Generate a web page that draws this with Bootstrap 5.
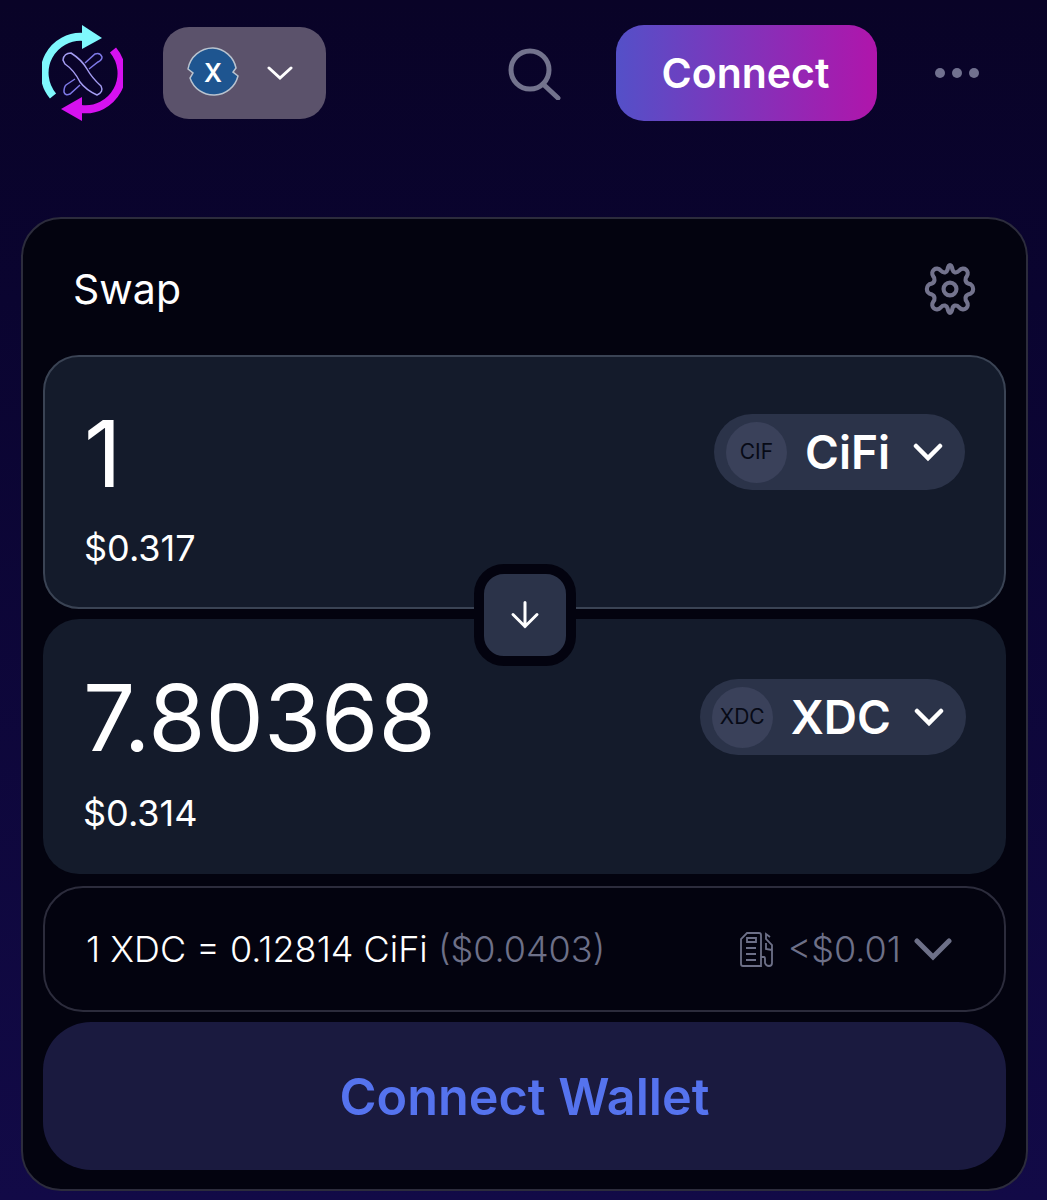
<!DOCTYPE html>
<html lang="en">
<head>
    <meta charset="UTF-8">
    <meta name="viewport" content="width=device-width, initial-scale=1.0">
    <title>Swap</title>
    <link href="https://cdn.jsdelivr.net/npm/bootstrap@5.3.0/dist/css/bootstrap.min.css" rel="stylesheet">
    <style>
        body {
            background: linear-gradient(180deg, #090327 0%, #0a0430 25%, #120a47 100%);
            font-family: Inter, "Liberation Sans", sans-serif;
            color: #fff;
            height: 1200px;
            overflow: hidden;
        }
        .top-bar { height: 146px; padding: 25px 0 25px 42px; }
        .logo-mark { width: 81px; height: 96px; }
        .chain-btn {
            width: 163px; height: 92px; margin-left: 40px; padding-left: 24px;
            background: #5b526b; border-radius: 26px; border: 0;
        }
        .chain-coin { width: 52px; height: 52px; }
        .chain-caret { width: 26px; height: 16px; margin-left: 28px; }
        .search-btn { width: 54px; height: 52px; margin-left: 182px; margin-top: 1px; }
        .connect-btn {
            width: 261px; height: 96px; margin-left: 54px;
            background: linear-gradient(90deg, #5450c8 0%, #b015ab 100%);
            border: 0; border-radius: 28px; color: #fff;
            font-size: 41px; font-weight: 600; padding: 2px 8px 0 6px;
        }
        .more-dots { margin-left: 58px; gap: 7px; }
        .more-dots span { width: 10px; height: 10px; border-radius: 50%; background: #71718f; }
        .swap-box {
            width: 1007px; height: 974px; margin: 71px 0 0 21px;
            background: #03030f; border: 2px solid #2c2c3c; border-radius: 40px;
            padding: 0 20px;
        }
        .swap-head { height: 136px; padding: 0 30px 0 30px; }
        .swap-title { font-size: 41px; font-weight: 400; line-height: 1; padding-top: 5px; }
        .gear-icon { width: 52px; height: 52px; margin-top: 4px; }
        .amount-panel {
            height: 255px; padding: 45px 40px 0 40px;
            background: #141b2b; border-radius: 36px;
        }
        .amount-panel.is-top { border: 2px solid #3a4354; height: 254px; padding: 43px 39px 0 39px; }
        .amount-value { font-size: 92.500px; line-height: 92px; font-weight: 400; margin-top: 7px; }
        .amount-usd { font-size: 36px; line-height: 44px; margin-top: 27px; font-weight: 400; }
        .amount-panel:not(.is-top) .amount-usd { margin-top: 28px; }
        .token-pill {
            height: 76px; padding: 0 22px 0 12px; margin-top: 14px;
            background: #2b3349; border-radius: 38px; border: 0; color: #fff;
        }
        .amount-panel:not(.is-top) .token-pill { margin-top: 15px; }
        .token-dot {
            width: 61px; height: 61px; border-radius: 50%;
            background: #3a415a; color: #070a16; font-size: 21px;
        }
        .token-name { font-size: 46px; font-weight: 600; margin-left: 18px; }
        .token-caret { width: 30px; height: 20px; margin-left: 23px; }
        .flip-wrap { height: 10px; z-index: 2; }
        .flip-btn {
            width: 102px; height: 102px; margin-top: 2px;
            background: #2b3349; border: 10px solid #03030f; border-radius: 30px;
        }
        .rate-row {
            height: 126px; margin-top: 12px; padding: 0 52px 0 41px;
            border: 2px solid #2c2c3c; border-radius: 40px; font-size: 36px; font-weight: 300;
        }
        .rate-muted { color: #6d7088; }
        .pump-icon { width: 34px; height: 36px; margin-right: 14px; }
        .rate-caret { width: 38px; height: 24px; margin-left: 13px; }
        .wallet-btn {
            width: 100%; height: 148px; margin-top: 10px;
            background: #1a1a3f; border: 0; border-radius: 48px;
            color: #5573ee; font-size: 50.300px; font-weight: 600; padding-top: 2px;
        }
    </style>
</head>
<body>
    <header class="top-bar d-flex align-items-center">
        <svg class="logo-mark flex-shrink-0" viewBox="42 25 81 96" fill="none">
            <path d="M53 96A36 36 0 0 1 84 37" stroke="#7ff8fd" stroke-width="8"/>
            <path d="M82 25L102 38L82 49Z" fill="#7ff8fd"/>
            <path d="M113 50A36 36 0 0 1 81 109" stroke="#d611f0" stroke-width="8"/>
            <path d="M82 97L61 109L82 121Z" fill="#d611f0"/>
            <path d="M63 60Q64 53 71 53Q82 60 87 69Q92 78 101 86Q104 92 97 95Q86 90 80 82Q74 70 65 64Z" stroke="#a49cf2" stroke-width="1.500"/>
            <path d="M85 63L95 54Q100 52 102 57Q102 60 98 62L89 69M75 79L66 85Q64 87 64 92Q65 96 70 94L80 85" stroke="#7d78e6" stroke-width="1.500"/>
        </svg>
        <button class="chain-btn d-flex align-items-center flex-shrink-0" type="button">
            <svg class="chain-coin" viewBox="0 0 52 52">
                <path d="M26 1A25 25 0 0 1 49 21L46 25L51 29A25 25 0 0 1 3 31L6 26L1 22A25 25 0 0 1 26 1Z" fill="#1e5590" stroke="#b9c3cf" stroke-width="1.500"/>
                <text x="26" y="35" text-anchor="middle" fill="#fff" font-size="25" font-weight="600" font-family="Inter, sans-serif">X</text>
            </svg>
            <svg class="chain-caret" viewBox="0 0 26 16" fill="none"><path d="M2 3L13 13L24 3" stroke="#fff" stroke-width="3" stroke-linecap="round"/></svg>
        </button>
        <svg class="search-btn flex-shrink-0" viewBox="0 0 54 52" fill="none" stroke="#73738d" stroke-width="5">
            <circle cx="22" cy="22" r="19"/><path d="M35 36L50 50" stroke-linecap="round"/>
        </svg>
        <button class="connect-btn flex-shrink-0" type="button">Connect</button>
        <div class="more-dots d-flex"><span></span><span></span><span></span></div>
    </header>

    <main class="swap-box">
        <div class="swap-head d-flex align-items-center justify-content-between">
            <div class="swap-title">Swap</div>
            <svg class="gear-icon" viewBox="-12.500 -12.500 25 25" fill="none" stroke="#73738d" stroke-width="2" stroke-linejoin="round">
                <circle r="3.100"/>
                <path d="M8.800 -2.600C11.900 -2.200 11.900 2.200 8.800 2.600C7 3.300 7.300 5.300 8 6C9.800 8.600 6.600 11.300 4.400 8.800C3 7.300 1.500 8 1.200 9.200C.7 12.200 -.7 12.200 -1.200 9.200C-1.500 8 -3 7.300 -4.400 8.800C-6.600 11.300 -9.800 8.600 -8 6C-7.300 5.300 -7 3.300 -8.800 2.600C-11.900 2.200 -11.900 -2.200 -8.800 -2.600C-7 -3.300 -7.300 -5.300 -8 -6C-9.800 -8.600 -6.600 -11.300 -4.400 -8.800C-3 -7.300 -1.500 -8 -1.200 -9.200C-.7 -12.200 .7 -12.200 1.200 -9.200C1.500 -8 3 -7.300 4.400 -8.800C6.600 -11.300 9.800 -8.600 8 -6C7.300 -5.300 7 -3.300 8.800 -2.600Z"/>
            </svg>
        </div>

        <section class="amount-panel is-top d-flex justify-content-between">
            <div>
                <div class="amount-value">1</div>
                <div class="amount-usd">$0.317</div>
            </div>
            <button class="token-pill d-flex align-items-center" type="button">
                <span class="token-dot flex-shrink-0 d-flex align-items-center justify-content-center">CIF</span>
                <span class="token-name">CiFi</span>
                <svg class="token-caret" viewBox="0 0 30 20" fill="none"><path d="M3 4L15 16L27 4" stroke="#fff" stroke-width="4.500" stroke-linecap="round"/></svg>
            </button>
        </section>
        <div class="flip-wrap position-relative d-flex justify-content-center align-items-center">
            <div class="flip-btn flex-shrink-0 d-flex align-items-center justify-content-center">
                <svg width="30" height="30" viewBox="0 0 30 30" fill="none" stroke="#fff" stroke-width="3" stroke-linecap="round"><path d="M15 2.500V26.500M3 14.500L15 26.500L27 14.500"/></svg>
            </div>
        </div>
        <section class="amount-panel d-flex justify-content-between">
            <div>
                <div class="amount-value">7.80368</div>
                <div class="amount-usd">$0.314</div>
            </div>
            <button class="token-pill d-flex align-items-center" type="button">
                <span class="token-dot flex-shrink-0 d-flex align-items-center justify-content-center">XDC</span>
                <span class="token-name">XDC</span>
                <svg class="token-caret" viewBox="0 0 30 20" fill="none"><path d="M3 4L15 16L27 4" stroke="#fff" stroke-width="4.500" stroke-linecap="round"/></svg>
            </button>
        </section>

        <section class="rate-row d-flex align-items-center">
            <div>1 XDC = 0.12814 CiFi <span class="rate-muted">($0.0403)</span></div>
            <div class="ms-auto d-flex align-items-center rate-muted">
                <svg class="pump-icon" viewBox="0 0 34 36" fill="none" stroke="#6d7088" stroke-width="1.800">
                    <path d="M21 35H3Q1 35 1 33V8L7 2H19Q21 2 21 4Z"/>
                    <path d="M6 17H16M6 23H16M6 29H16M7 7H16V11H7Z"/>
                    <path d="M21 26H24Q25 26 25 28V32Q26 35 29 35Q32 35 32 32V14L26 8V3L30 6M26 12L26 18L32 19"/>
                </svg>
                <span>&lt;$0.01</span>
                <svg class="rate-caret" viewBox="0 0 38 24" fill="none"><path d="M3 4L19 20L35 4" stroke="#6d7088" stroke-width="5" stroke-linecap="round"/></svg>
            </div>
        </section>

        <button class="wallet-btn d-block" type="button">Connect Wallet</button>
    </main>
</body>
</html>
